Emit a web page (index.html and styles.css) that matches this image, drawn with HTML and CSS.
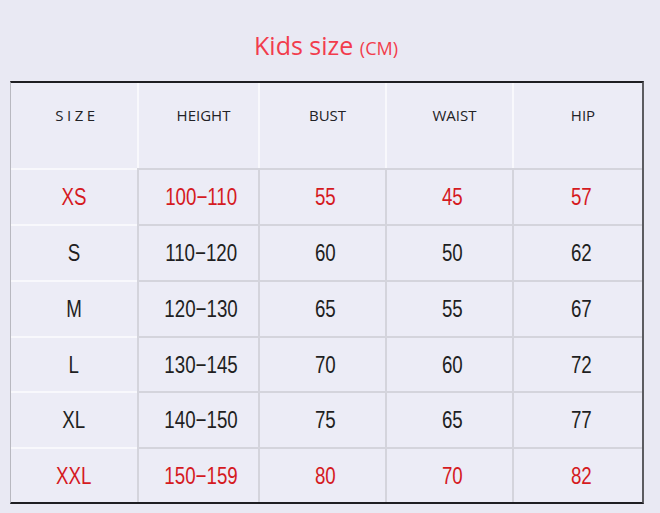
FILE: index.html
```
<!DOCTYPE html>
<html>
<head>
<meta charset="utf-8">
<link rel="stylesheet" href="styles.css">
</head>
<body>
<div class="page">
  <h1 class="title">Kids size <span class="unit">(CM)</span></h1>
  <div class="table">
    <div class="hcell first"><span class="spaced">SIZE</span></div>
    <div class="hcell">HEIGHT</div>
    <div class="hcell">BUST</div>
    <div class="hcell">WAIST</div>
    <div class="hcell">HIP</div>

    <div class="cell first red"><span class="v">XS</span></div>
    <div class="cell red"><span class="v">100−110</span></div>
    <div class="cell red"><span class="v">55</span></div>
    <div class="cell red"><span class="v">45</span></div>
    <div class="cell red"><span class="v">57</span></div>

    <div class="cell first"><span class="v">S</span></div>
    <div class="cell"><span class="v">110−120</span></div>
    <div class="cell"><span class="v">60</span></div>
    <div class="cell"><span class="v">50</span></div>
    <div class="cell"><span class="v">62</span></div>

    <div class="cell first"><span class="v">M</span></div>
    <div class="cell"><span class="v">120−130</span></div>
    <div class="cell"><span class="v">65</span></div>
    <div class="cell"><span class="v">55</span></div>
    <div class="cell"><span class="v">67</span></div>

    <div class="cell first"><span class="v">L</span></div>
    <div class="cell"><span class="v">130−145</span></div>
    <div class="cell"><span class="v">70</span></div>
    <div class="cell"><span class="v">60</span></div>
    <div class="cell"><span class="v">72</span></div>

    <div class="cell first"><span class="v">XL</span></div>
    <div class="cell"><span class="v">140−150</span></div>
    <div class="cell"><span class="v">75</span></div>
    <div class="cell"><span class="v">65</span></div>
    <div class="cell"><span class="v">77</span></div>

    <div class="cell first red"><span class="v">XXL</span></div>
    <div class="cell red"><span class="v">150−159</span></div>
    <div class="cell red"><span class="v">80</span></div>
    <div class="cell red"><span class="v">70</span></div>
    <div class="cell red"><span class="v">82</span></div>
  </div>
</div>
</body>
</html>
```
FILE: styles.css
```
html, body {
  margin: 0;
  padding: 0;
  background: #e9e9f3;
}
.page {
  width: 660px;
  height: 513px;
  overflow: hidden;
}
.title {
  margin: 0;
  padding-top: 28px;
  padding-right: 8px;
  height: 34px;
  line-height: 34px;
  text-align: center;
  font-family: "Open Sans", "Noto Sans", sans-serif;
  font-weight: 400;
  font-size: 25px;
  color: #f23c4c;
}
.unit {
  font-size: 18px;
  line-height: 1;
}
.table {
  margin: 19px 0 0 10px;
  width: 631px;
  display: grid;
  grid-template-columns: 126px 121px 127px 127px 130px;
  grid-template-rows: 85px 56px 56px 56px 55px 56px 55px;
  border-top: 2px solid #1e1e22;
  border-bottom: 2px solid #1e1e22;
  border-left: 1px solid #b8b8c0;
  border-right: 2px solid #5c5c60;
  background: #ececf6;
}
.hcell {
  display: flex;
  justify-content: center;
  align-items: flex-start;
  padding: 22px 0 0 10px;
  font-family: "Open Sans", "Noto Sans", sans-serif;
  font-size: 15px;
  color: #222226;
  border-left: 2px solid #f8f8fc;
}
.hcell.first {
  border-left: none;
  padding-left: 6px;
}
.spaced {
  letter-spacing: 3.5px;
}
.cell {
  display: flex;
  justify-content: center;
  align-items: center;
  padding: 0 0 0 6px;
  font-family: "Liberation Sans", Arial, sans-serif;
  font-size: 24px;
  color: #1f1f22;
  border-top: 2px solid #d4d4dc;
  border-left: 2px solid #d4d4dc;
}
.v {
  display: inline-block;
  transform: scaleX(0.78);
}
.cell.first {
  border-left: none;
  padding-left: 0;
  border-top-color: #f8f8fc;
}
.red {
  color: #d51a1f;
}
```
